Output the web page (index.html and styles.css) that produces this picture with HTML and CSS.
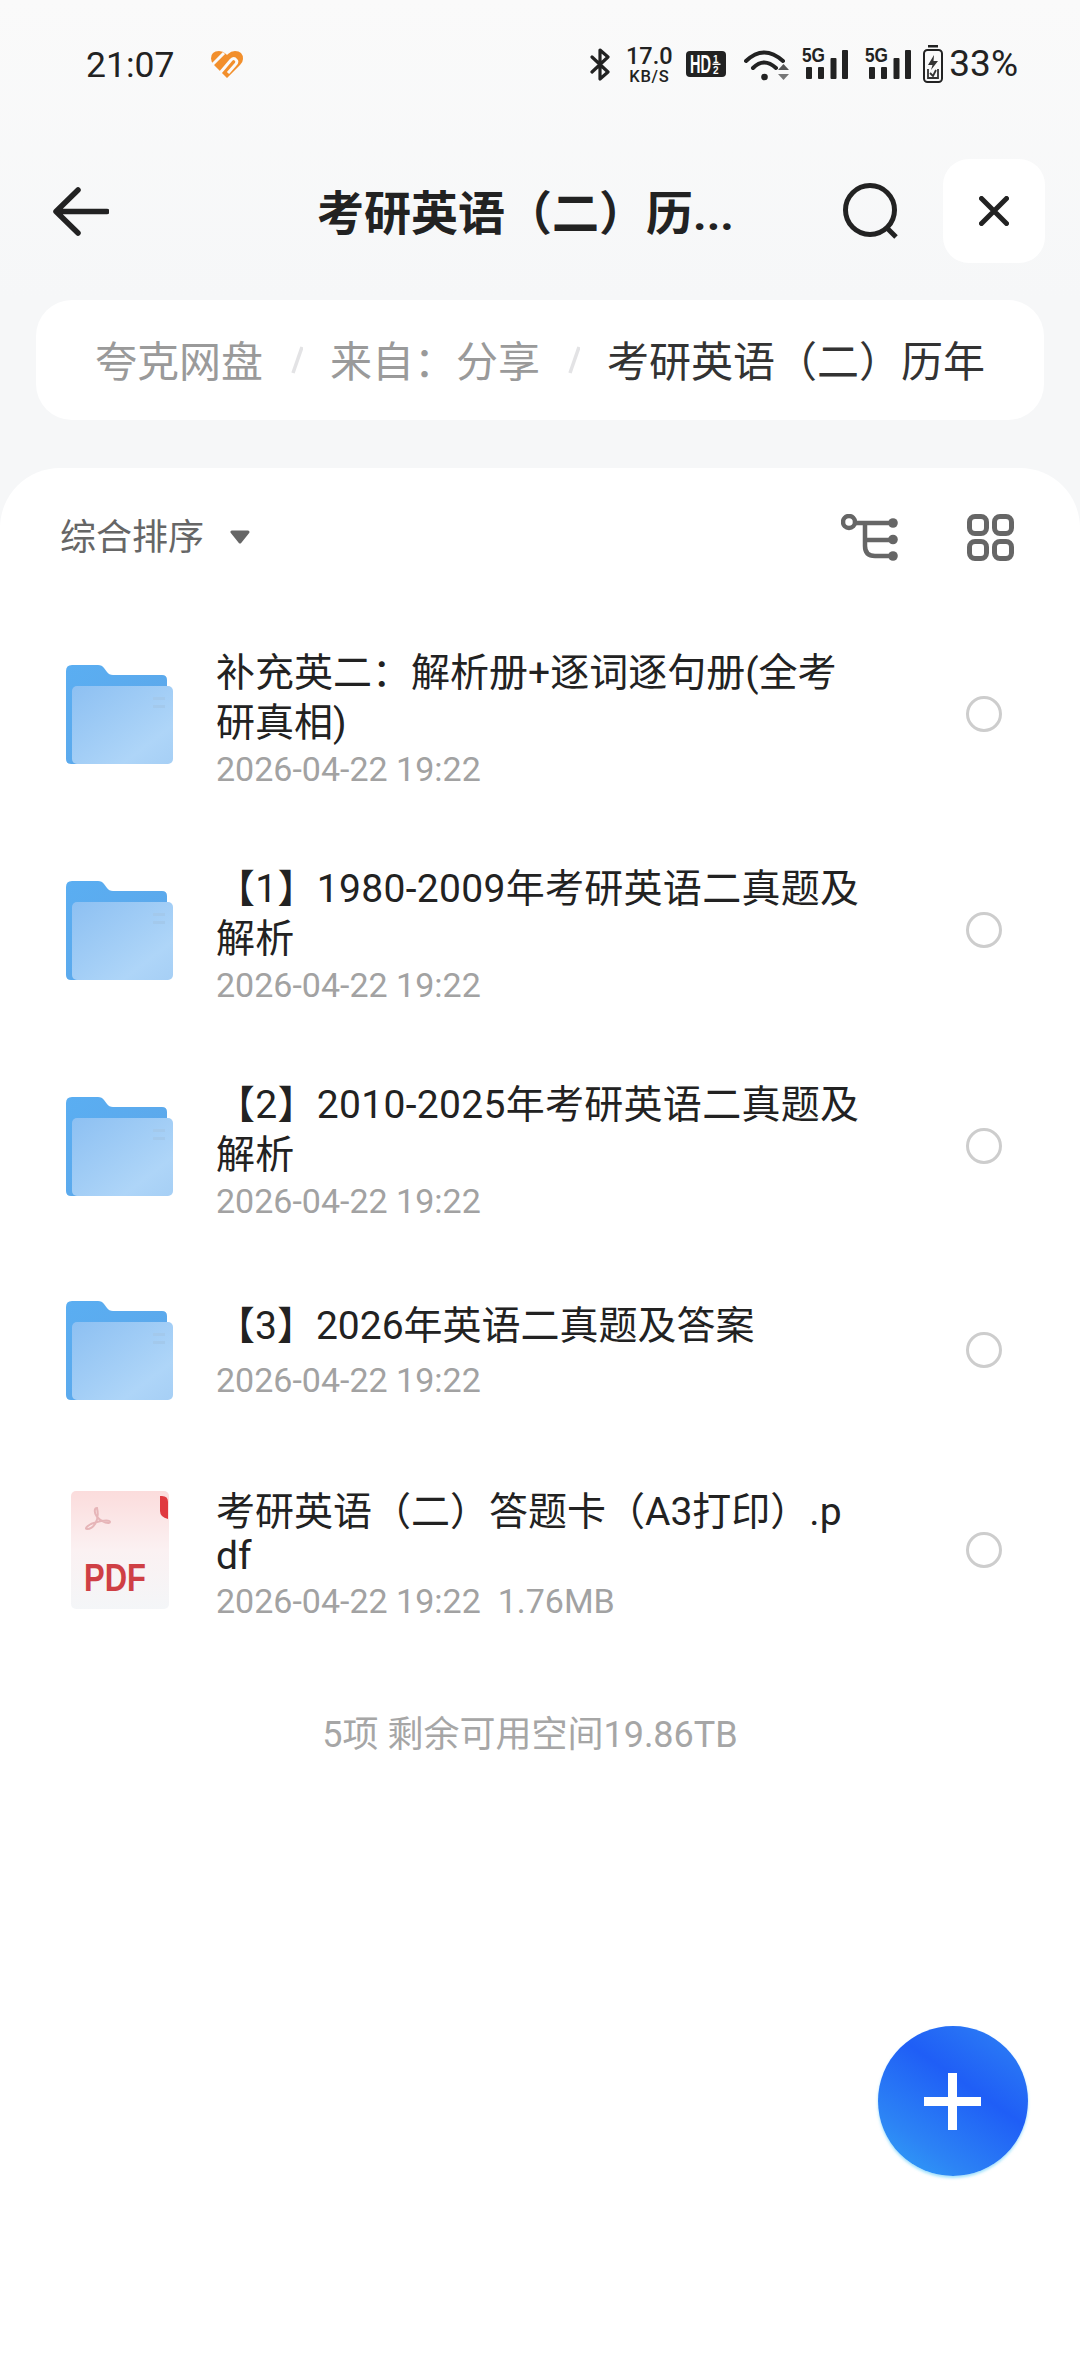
FILE: index.html
```html
<!DOCTYPE html>
<html lang="zh-CN">
<head>
<meta charset="utf-8">
<title>考研英语（二）历年</title>
<link rel="stylesheet" href="styles.css">
</head>
<body>
<svg class="defs" width="0" height="0" aria-hidden="true">
  <defs>
    <linearGradient id="folderBack" x1="0" y1="0" x2="1" y2="1"><stop offset="0" stop-color="#5aaef2"/><stop offset="1" stop-color="#5da6e8"/></linearGradient>
    <linearGradient id="folderFront" x1="0" y1="0" x2="1" y2="1"><stop offset="0" stop-color="#8dc0f2"/><stop offset="0.75" stop-color="#aed5f8"/><stop offset="1" stop-color="#a6cff5"/></linearGradient>
    <linearGradient id="pdfBody" x1="0.5" y1="0" x2="0.5" y2="1"><stop offset="0" stop-color="#fbdcdc"/><stop offset="0.5" stop-color="#fbf1f2"/><stop offset="1" stop-color="#f4f6f8"/></linearGradient>
    <symbol id="folder" viewBox="0 0 107 99">
      <path d="M6 0H32Q36 0 38 3L41 7Q43 10 47 10H96Q101 10 101 15V94Q101 99 96 99H5Q0 99 0 94V6Q0 0 6 0Z" fill="url(#folderBack)"/>
      <rect x="6" y="21" width="101" height="78" rx="5" fill="url(#folderFront)"/>
      <rect x="87" y="32" width="12" height="3" fill="#a3c9ec"/>
      <rect x="87" y="40" width="12" height="3" fill="#a3c9ec"/>
    </symbol>
    <symbol id="signal" viewBox="0 0 46 32">
      <text x="0" y="15" class="sig-text" textLength="23" lengthAdjust="spacingAndGlyphs">5G</text>
      <rect x="4" y="20" width="6" height="12" rx="1"/>
      <rect x="16" y="20" width="6" height="12" rx="1"/>
      <rect x="28.500" y="11" width="6" height="21" rx="1"/>
      <rect x="40" y="3" width="6" height="29" rx="1"/>
    </symbol>
  </defs>
</svg>

<header class="status">
  <div class="status-left">
    <span class="time">21:07</span>
    <svg class="heart" viewBox="0 0 32 27">
      <path d="M16 27L3 14Q0 11 0 7.500Q0 0 8 0Q12 0 15 3L16 4L17 3Q20 0 24 0Q32 0 32 8Q32 11 29 14Z" fill="#f28f2c"/>
      <path d="M1 14L13 2M9 22L20 9Q23 6 25 9Q27 11 24 14L17 22" fill="none" stroke="#fafafa" stroke-width="3"/>
    </svg>
  </div>
  <div class="status-right">
    <svg class="i-bt" viewBox="0 0 20 33"><path d="M2 9L18 24L10 31V2L18 9L2 24" fill="none" stroke="#222" stroke-width="3.200" stroke-linejoin="round" stroke-linecap="round"/></svg>
    <div class="speed"><span class="speed-val">17.0</span><span class="speed-unit">KB/S</span></div>
    <svg class="i-hd" viewBox="0 0 40 26">
      <rect width="40" height="26" rx="4" fill="#222"/>
      <text class="hd-text" transform="translate(4 22) scale(0.97 1.67)">HD</text>
      <text x="27" y="11.500" class="hd-small">1</text>
      <rect x="26.500" y="12.500" width="8" height="1.500" fill="#fff"/>
      <text x="27" y="23" class="hd-small">2</text>
    </svg>
    <svg class="i-wifi" viewBox="0 0 45 33">
      <path d="M2 13Q20 -4 39 13" fill="none" stroke="#222" stroke-width="4" stroke-linecap="round"/>
      <path d="M9 20Q20 9 32 20" fill="none" stroke="#222" stroke-width="4" stroke-linecap="round"/>
      <circle cx="20.500" cy="29" r="3.300" fill="#222"/>
      <path d="M34 22L39.500 16L45 22Z" fill="#555"/>
      <path d="M34 26L39.500 32L45 26Z" fill="#777"/>
    </svg>
    <svg class="i-sig"><use href="#signal"/></svg>
    <svg class="i-sig i-sig-2"><use href="#signal"/></svg>
    <svg class="i-bat" viewBox="0 0 20 38">
      <rect x="5" y="0" width="10" height="2.500" fill="#222"/>
      <rect x="1" y="5" width="18" height="32" rx="3.500" fill="none" stroke="#222" stroke-width="2"/>
      <path d="M11 10L5 20H9.500L8 25L15 16H10.500Z" fill="#333"/>
      <path d="M5 24V33H15V24" fill="none" stroke="#333" stroke-width="1.800"/>
      <path d="M7 28L10 31L13 25" fill="none" stroke="#333" stroke-width="1.800"/>
    </svg>
    <span class="battery">33%</span>
  </div>
</header>

<nav class="nav">
  <svg class="i-back" viewBox="0 0 56 49"><path d="M25 3L3 24.500L25 46M4 24.500H54" fill="none" stroke="#222" stroke-width="5.500" stroke-linecap="round" stroke-linejoin="round"/></svg>
  <h1 class="title">考研英语（二）历...</h1>
  <svg class="i-search" viewBox="0 0 56 56"><circle cx="27" cy="27" r="24.500" fill="none" stroke="#222" stroke-width="5"/><path d="M43 44L53 54" stroke="#222" stroke-width="5"/></svg>
  <div class="close"><svg class="i-close" viewBox="0 0 30 30"><path d="M2.500 2.500L27.500 27.500M27.500 2.500L2.500 27.500" stroke="#222" stroke-width="5" stroke-linecap="round"/></svg></div>
</nav>

<div class="crumbs">
  <span class="crumb">夸克网盘</span>
  <svg class="sep" viewBox="0 0 12 28"><path d="M11 1L2 27" stroke="#e3e3e5" stroke-width="3.500"/></svg>
  <span class="crumb">来自：分享</span>
  <svg class="sep" viewBox="0 0 12 28"><path d="M11 1L2 27" stroke="#e3e3e5" stroke-width="3.500"/></svg>
  <span class="crumb crumb-current">考研英语（二）历年</span>
</div>

<main class="sheet">
  <div class="toolbar">
    <span class="sort">综合排序</span>
    <svg class="caret" viewBox="0 0 20 14"><path d="M2 2H18L10 12Z" fill="#666" stroke="#666" stroke-width="3" stroke-linejoin="round"/></svg>
    <svg class="i-tree" viewBox="0 0 57 47">
      <circle cx="8" cy="8" r="6" fill="none" stroke="#666" stroke-width="4.500"/>
      <path d="M14 9H52M24 9V32Q24 42 34 42H52M24 26H52" fill="none" stroke="#666" stroke-width="4.500"/>
      <circle cx="52" cy="9" r="4.800" fill="#666"/><circle cx="52" cy="25.500" r="4.800" fill="#666"/><circle cx="52" cy="42" r="4.800" fill="#666"/>
    </svg>
    <svg class="i-grid" viewBox="0 0 47 47">
      <g fill="none" stroke="#666" stroke-width="5">
        <rect x="2.500" y="2.500" width="17" height="17" rx="5.500"/><rect x="27.500" y="2.500" width="17" height="17" rx="5.500"/>
        <rect x="2.500" y="27.500" width="17" height="17" rx="5.500"/><rect x="27.500" y="27.500" width="17" height="17" rx="5.500"/>
      </g>
    </svg>
  </div>

  <ul class="list">
    <li class="row">
      <svg class="i-folder"><use href="#folder"/></svg>
      <div class="info"><p class="name">补充英二：解析册+逐词逐句册(全考研真相)</p><p class="meta">2026-04-22 19:22</p></div>
      <span class="radio"></span>
    </li>
    <li class="row">
      <svg class="i-folder"><use href="#folder"/></svg>
      <div class="info"><p class="name name-wide">【1】1980-2009年考研英语二真题及解析</p><p class="meta">2026-04-22 19:22</p></div>
      <span class="radio"></span>
    </li>
    <li class="row">
      <svg class="i-folder"><use href="#folder"/></svg>
      <div class="info"><p class="name name-wide">【2】2010-2025年考研英语二真题及解析</p><p class="meta">2026-04-22 19:22</p></div>
      <span class="radio"></span>
    </li>
    <li class="row row-single">
      <svg class="i-folder"><use href="#folder"/></svg>
      <div class="info"><p class="name">【3】2026年英语二真题及答案</p><p class="meta">2026-04-22 19:22</p></div>
      <span class="radio"></span>
    </li>
    <li class="row row-file">
      <svg class="i-pdf" viewBox="0 0 98 118">
        <rect x="0" y="0" width="98" height="118" rx="5" fill="url(#pdfBody)"/>
        <path d="M89 5H91Q97 5 97 11V28Q89 26 89 20Z" fill="#e0393f"/>
        <path d="M26 17C29 30 22 38 16 38C13 38 17 33 26 31C33 29 39 29 39 31C39 33 31 32 26 26C23 22 23 17 26 17Z" fill="none" stroke="#e6b5b8" stroke-width="2"/>
        <text x="13" y="100" class="pdf-text" textLength="62" lengthAdjust="spacingAndGlyphs">PDF</text>
      </svg>
      <div class="info"><p class="name name-tight">考研英语（二）答题卡（A3打印）.pdf</p><p class="meta">2026-04-22 19:22&nbsp;&nbsp;1.76MB</p></div>
      <span class="radio"></span>
    </li>
  </ul>

  <p class="summary">5项 剩余可用空间19.86TB</p>

  <button class="fab" type="button" aria-label="新建"><span class="fab-plus"></span></button>
</main>
</body>
</html>
```

FILE: styles.css
```css
* { box-sizing: border-box; }
html, body { margin: 0; padding: 0; }
body {
  width: 1080px;
  height: 2376px;
  overflow: hidden;
  display: flex;
  flex-direction: column;
  background: linear-gradient(#fafafa, #f6f7f8 300px);
  font-family: Roboto, "Noto Sans CJK SC", sans-serif;
  color: #222;
}
p, h1, ul { margin: 0; padding: 0; }
ul { list-style: none; }
svg { display: block; flex: none; }
.defs { position: absolute; }

/* status bar */
.status {
  height: 128px;
  flex: none;
  display: flex;
  align-items: center;
  justify-content: space-between;
  padding: 0 62px 0 86px;
}
.status-left { display: flex; align-items: center; }
.time { font-size: 35.500px; line-height: 40px; color: #222; padding-top: 1px; }
.heart { width: 32px; height: 27px; margin-left: 37px; }
.status-right { display: flex; align-items: center; }
.i-bt { width: 20px; height: 33px; }
.speed { display: flex; flex-direction: column; align-items: center; gap: 4px; margin-left: 18px; width: 42px; }
.speed-val { font-size: 23.500px; line-height: 20px; font-weight: 500; }
.speed-unit { font-size: 16.500px; line-height: 13px; font-weight: 500; letter-spacing: .7px; }
.i-hd { width: 40px; height: 26px; margin-left: 16px; }
.hd-text { font: 700 15px "Liberation Sans", sans-serif; fill: #fff; }
.hd-small { font: 700 10px "Liberation Sans", sans-serif; fill: #fff; }
.i-wifi { width: 45px; height: 33px; margin-left: 18px; }
.i-sig { width: 46px; height: 32px; margin-left: 13px; margin-top: -2px; fill: #222; }
.i-sig-2 { margin-left: 17px; }
.sig-text { font: 700 21px "Liberation Sans", sans-serif; fill: #222; }
.i-bat { width: 20px; height: 38px; margin-left: 12px; }
.battery { font-size: 37px; line-height: 40px; margin-left: 6px; color: #222; }

/* navigation */
.nav {
  height: 166px;
  flex: none;
  display: flex;
  align-items: center;
  padding-left: 53px;
}
.i-back { width: 56px; height: 49px; }
.title {
  margin-left: 208px;
  margin-top: 5px;
  width: 420px;
  font-size: 47px;
  line-height: 60px;
  font-weight: 700;
  white-space: nowrap;
  color: #222;
}
.i-search { width: 56px; height: 56px; margin-left: 106px; }
.close {
  width: 102px;
  height: 104px;
  margin-left: 44px;
  border-radius: 26px;
  background: #fff;
  display: flex;
  align-items: center;
  justify-content: center;
}
.i-close { width: 30px; height: 30px; }

/* breadcrumb */
.crumbs {
  flex: none;
  height: 120px;
  margin: 6px 36px 0;
  padding: 6px 0 0 59px;
  border-radius: 36px;
  background: #fff;
  display: flex;
  align-items: center;
}
.crumb { font-size: 42px; line-height: 56px; color: #9a9a9a; white-space: nowrap; }
.crumb-current { color: #333; }
.sep { width: 12px; height: 28px; margin: -6px 27.500px 0; }

/* sheet */
.sheet {
  position: relative;
  flex: 1;
  margin-top: 48px;
  background: #fff;
  border-radius: 60px 60px 0 0;
}
.toolbar {
  height: 138px;
  display: flex;
  align-items: center;
  padding: 0 66px 0 60px;
}
.sort { font-size: 36px; line-height: 50px; color: #666; padding-top: 1px; }
.caret { width: 20px; height: 14px; margin-left: 26px; }
.i-tree { width: 57px; height: 47px; margin-left: auto; }
.i-grid { width: 47px; height: 47px; margin-left: 69px; }

.row {
  height: 216px;
  display: flex;
  align-items: center;
  padding: 0 78px 0 66px;
}
.row-single { height: 192px; }
.row-file { height: 208px; }
.i-folder { width: 107px; height: 99px; }
.i-pdf { width: 98px; height: 118px; margin-left: 5px; margin-right: 4px; }
.info { width: 645px; margin: 10px 0 0 43px; }
.name { font-size: 39px; line-height: 50px; color: #222; word-break: break-all; }
.name-wide { letter-spacing: .3px; }
.name-tight { line-height: 44px; }
.meta { font-size: 34px; line-height: 44px; color: #a2a2a2; margin-top: -1px; }
.row-single .info { margin-top: 2px; }
.row-single .meta { margin-top: 7px; }
.row-file .info { margin-top: 13px; }
.row-file .meta { margin-top: 1px; }
.pdf-text { font: 700 38px "Liberation Sans", sans-serif; fill: #cf3f45; }
.radio {
  width: 36px;
  height: 36px;
  margin-left: auto;
  border-radius: 50%;
  border: 3px solid #cdcdcd;
}
.summary {
  height: 154px;
  padding-right: 20px;
  display: flex;
  align-items: center;
  justify-content: center;
  font-size: 36px;
  color: #a6a6a6;
}

/* floating action button */
.fab {
  position: absolute;
  left: 878px;
  top: 1558px;
  width: 150px;
  height: 150px;
  padding: 0;
  border: 0;
  border-radius: 50%;
  background: linear-gradient(35deg, #32a6f7 0%, #2c83f5 25%, #1f5ef6 60%, #2f84f4 100%);
  box-shadow: 0 2px 3px rgba(80, 200, 250, .55);
}
.fab-plus {
  position: absolute;
  left: 46px;
  top: 47px;
  width: 57px;
  height: 57px;
  background:
    linear-gradient(#fff, #fff) center / 9px 57px no-repeat,
    linear-gradient(#fff, #fff) center / 57px 9px no-repeat;
}
```
